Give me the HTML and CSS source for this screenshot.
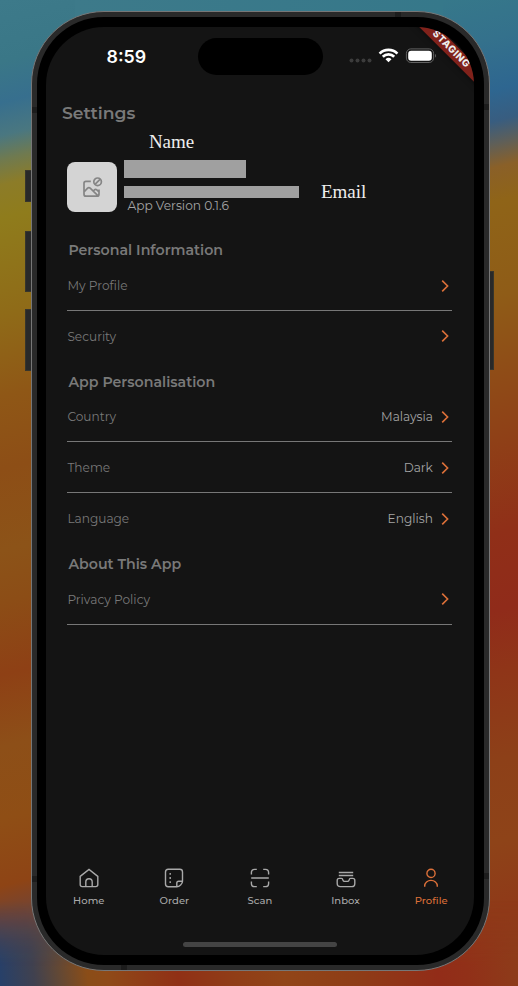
FILE: index.html
```html
<!DOCTYPE html>
<html lang="en">
<head>
<meta charset="utf-8">
<title>Settings</title>
<link rel="stylesheet" href="styles.css">
</head>
<body>
<svg class="defs" width="0" height="0"><symbol id="chev" viewBox="0 0 8 14"><path d="M1.2 1.6 6.6 7l-5.4 5.4"/></symbol></svg>
<div class="wallpaper">
  <div class="wall-left"></div><div class="wall-right"></div><div class="wall-bottom"></div>
  <div class="key key-action"></div><div class="key key-up"></div><div class="key key-down"></div><div class="key key-power"></div>
  <div class="phone">
    <i class="band band-top"></i><i class="band band-bottom"></i><i class="band band-l1"></i><i class="band band-l2"></i><i class="band band-r1"></i><i class="band band-r2"></i>
    <div class="bezel">
      <div class="screen">
        <header class="status">
          <span class="time">8:59</span>
          <span class="island"></span>
          <svg class="signals" width="90" height="20" viewBox="0 0 90 20">
            <g fill="#3c3c3c"><circle cx="5.5" cy="14.6" r="2"/><circle cx="11.5" cy="14.6" r="2"/><circle cx="17.5" cy="14.6" r="2"/><circle cx="23.5" cy="14.6" r="2"/></g>
            <g fill="none" stroke="#fff" stroke-width="2.7"><path d="M33.6 7.6a12.6 12.6 0 0 1 17.8 0"/><path d="M36.8 10.8a8 8 0 0 1 11.4 0"/></g>
            <path d="M42.5 16.2l-3-3a4.4 4.4 0 0 1 6 0z" fill="#fff"/>
            <rect x="60.4" y="2.9" width="27.2" height="13.6" rx="4.4" fill="none" stroke="#626262"/>
            <rect x="62.2" y="4.7" width="23.6" height="10" rx="3" fill="#fff"/>
            <path d="M89 7.7q2 2 0 4z" fill="#626262"/>
          </svg>
        </header>
        <div class="ribbon">STAGING</div>
        <main>
          <h1>Settings</h1>
          <div class="account">
            <div class="avatar">
              <svg width="22" height="22" viewBox="0 0 22 22" fill="none" stroke="#858585" stroke-width="1.7"><path d="M9.8 5.3H5q-2 0-2 2v10.9q0 2 2 2h11q2 0 2-2v-4.7M3 16l3.6-3.8q1.3-1.2 2.6 0l7.9 7.7M12.3 14.8l1.2-1q1.2-.9 2.3 0l2.2 2"/><circle cx="16.6" cy="5.8" r="3.8"/><path d="m14 8.4 5.2-5.2"/></svg>
            </div>
            <div class="details">
              <span class="mask mask-name"></span>
              <span class="mask mask-email"></span>
              <span class="version">App Version 0.1.6</span>
            </div>
            <span class="note note-name">Name</span>
            <span class="note note-email">Email</span>
          </div>
          <section>
            <h2>Personal Information</h2>
            <div class="row"><span>My Profile</span><svg class="chev"><use href="#chev"/></svg></div>
            <div class="row plain"><span>Security</span><svg class="chev"><use href="#chev"/></svg></div>
          </section>
          <section>
            <h2>App Personalisation</h2>
            <div class="row"><span>Country</span><b>Malaysia</b><svg class="chev"><use href="#chev"/></svg></div>
            <div class="row"><span>Theme</span><b>Dark</b><svg class="chev"><use href="#chev"/></svg></div>
            <div class="row plain"><span>Language</span><b>English</b><svg class="chev"><use href="#chev"/></svg></div>
          </section>
          <section>
            <h2>About This App</h2>
            <div class="row"><span>Privacy Policy</span><svg class="chev"><use href="#chev"/></svg></div>
          </section>
        </main>
        <nav>
          <a><svg viewBox="0 0 20 20"><path d="M1.2 8.4 10 1.4l8.8 7v8.2q0 2-2 2H3.2q-2 0-2-2zM6.8 18.6V14a3.2 3.2 0 0 1 6.4 0v4.6"/></svg>Home</a>
          <a><svg viewBox="0 0 20 20"><path d="M12.8 18.7H4.2q-2.7 0-2.7-2.7V4q0-2.7 2.7-2.7h11.6q2.7 0 2.7 2.7v9.2q0 2-1.9 3.8-1.8 1.7-3.8 1.7v-3.6q0-1.9 1.9-1.9h3.8"/><path d="M6.2 5v1.8M6.2 9.1v1.8M6.2 13.2V15"/></svg>Order</a>
          <a><svg viewBox="0 0 20 20"><path d="M1.2 10h17.6M1.4 6.4V4.6q0-3.2 3.2-3.2h2.2M13.2 1.4h2.2q3.2 0 3.2 3.2v1.8M1.4 13.6v1.8q0 3.2 3.2 3.2h2.2M13.2 18.6h2.2q3.2 0 3.2-3.2v-1.8"/></svg>Scan</a>
          <a><svg viewBox="0 0 20 20"><path d="M2.8 4.5h14.4M2.8 7.5h14.4M1.2 15.4v-3q0-2 2-2h2.2q1.2 0 1.5 1.6.4 1.4 1.6 1.4h3q1.2 0 1.6-1.4.3-1.6 1.5-1.6h2.2q2 0 2 2v3q0 3.2-3.2 3.2H4.4q-3.2 0-3.2-3.2z"/></svg>Inbox</a>
          <a class="active"><svg viewBox="0 0 20 20"><circle cx="10" cy="5.4" r="4.1"/><path d="M3.7 18.8v-.8a6.3 5.6 0 0 1 12.6 0v.8"/></svg>Profile</a>
        </nav>
        <div class="home-bar"></div>
      </div>
    </div>
  </div>
</div>
</body>
</html>
```
FILE: styles.css
```css
* { box-sizing: border-box; }
body { margin: 0; font-family: Montserrat, Inter, sans-serif; }
.defs { position: absolute; }
.wallpaper { position: relative; width: 518px; height: 986px; padding: 11px 28px 0 31px; overflow: hidden; background: linear-gradient(90deg, #3d7a8a 75px, #36788a 443px); }
.wall-left, .wall-right, .wall-bottom { position: absolute; }
.wall-left { left: 0; top: 0; width: 75px; height: 986px; background: linear-gradient(166deg, #3d7a8a 0, #3a7787 60px, #376f8e 100px, #4a7780 132px, #6f7a50 155px, #8c7c28 180px, #8f7c1c 212px, #8f6b18 305px, #8f5716 385px, #8d4e16 455px, #8c5318 535px, #8c4d16 585px, #8e4015 655px, #8d4f18 725px, #8f4e15 795px, #8e4415 860px, #6e443a 895px, #3f4458 935px, #2a406c 975px); }
.wall-right { right: 0; top: 0; width: 75px; height: 986px; background: linear-gradient(166deg, #36788a 0, #34718c 50px, #2e6690 100px, #385d80 130px, #5f5f58 152px, #8a6028 175px, #8f6418 208px, #8f5c17 300px, #8f4d17 370px, #8f4017 440px, #902f18 530px, #902b1a 605px, #8f3518 665px, #8d4018 750px, #8e4318 830px, #8f3918 900px, #8f371a 986px); }
.wall-bottom { left: 0; bottom: 0; width: 518px; height: 85px; background: linear-gradient(82deg, #26406a 0, #40414f 35px, #624835 60px, #8a4d18 88px, #8f4a18 108px, #903016 178px, #903d17 233px, #914518 283px, #8e3d17 353px, #922c18 435px, #913018 465px, #8d3c1a 518px); -webkit-mask-image: linear-gradient(transparent, #000 65px); mask-image: linear-gradient(transparent, #000 65px); }
.key { position: absolute; background: #292929; border: 1px solid #37352c; }
.key-action { left: 25px; top: 170px; width: 8px; height: 32px; }
.key-up { left: 25px; top: 231px; width: 8px; height: 61px; }
.key-down { left: 25px; top: 309px; width: 8px; height: 62px; }
.key-power { right: 24px; top: 271px; width: 6px; height: 99px; }
.phone { position: relative; width: 459px; height: 960px; padding: 5px; border: 1px solid #777; border-radius: 73px; background: #292929; }
.band { position: absolute; background: #1c1c1c; }
.band-top { left: 363px; top: 0; width: 6px; height: 5px; }
.band-bottom { left: 89px; bottom: 0; width: 6px; height: 5px; }
.band-l1, .band-l2 { left: 0; width: 5px; height: 6px; }
.band-r1, .band-r2 { right: 0; width: 5px; height: 6px; }
.band-l1 { top: 95px; } .band-l2 { top: 864px; }
.band-r1 { top: 92px; } .band-r2 { top: 861px; }
.bezel { height: 948px; padding: 10px 10px 10px 9px; background: #000; border-radius: 67px; }
.screen { position: relative; width: 428px; height: 928px; border-radius: 58px; background: #141414; overflow: hidden; display: flex; flex-direction: column; }
.status { height: 72px; display: grid; grid-template-columns: 151.5px 126px 1fr; }
.time { padding: 19px 0 0 60.5px; font: 600 17.8px/21px Inter, sans-serif; color: #fff; }
.island { height: 37px; width: 125px; margin-top: 11px; border-radius: 19px; background: #000; }
.signals { margin: 19px 0 0 22.5px; }
.ribbon { position: absolute; left: 354.5px; top: 16.1px; width: 100px; height: 12.8px; background: #81221b; color: #eee; font: 800 9.8px/12.8px Inter, sans-serif; letter-spacing: .6px; text-align: center; transform: rotate(45deg); box-shadow: 0 0 6px #0008; }
main { flex: 1; padding: 0 21.4px; color: #797979; }
h1 { margin: 0 0 0 -5.5px; height: 63px; font-size: 17.2px; line-height: 28px; font-weight: 600; }
.account { position: relative; height: 68.4px; display: flex; gap: 7px; }
.avatar { width: 50px; height: 50px; border-radius: 8px; background: #d4d4d4; display: grid; place-items: center; }
.details { display: flex; flex-direction: column; margin-top: -2.4px; }
.mask { background: #a0a0a0; }
.mask-name { width: 122px; height: 18px; }
.mask-email { width: 175px; height: 12px; margin-top: 8px; }
.version { margin-left: 3px; font-size: 12.2px; line-height: 15.5px; color: #a5a5a5; }
.note { position: absolute; font: 19px/24px "Liberation Serif", serif; color: #eee; }
.note-name { left: 81.5px; top: -32px; }
.note-email { left: 253.5px; top: 18px; }
h2 { margin: 0 0 0 1px; padding-top: 10px; height: 29.8px; font-size: 14.2px; line-height: 20px; font-weight: 600; }
.row { height: 50.8px; width: 385px; display: flex; align-items: center; border-bottom: 1px solid #777; font-size: 12.15px; padding: 1px 3px 0 0; }
.plain { border-color: transparent; }
.row b { margin-left: auto; font-weight: 400; color: #a5a5a5; }
.row b + .chev { margin-left: 8.5px; }
.chev { width: 8px; height: 14px; margin-left: auto; fill: none; stroke: #dc7039; stroke-width: 1.6; }
nav { display: flex; height: 87.5px; }
nav a { flex: 1; display: flex; flex-direction: column; align-items: center; gap: 6.5px; color: #a9a9a9; font-size: 10px; line-height: 14px; font-weight: 500; letter-spacing: .06px; }
nav svg { width: 20px; height: 20px; fill: none; stroke: currentColor; stroke-width: 1.4; }
nav .active { color: #dc7039; }
.home-bar { position: absolute; left: 137px; bottom: 8px; width: 154px; height: 5px; border-radius: 3px; background: #444; }
```
